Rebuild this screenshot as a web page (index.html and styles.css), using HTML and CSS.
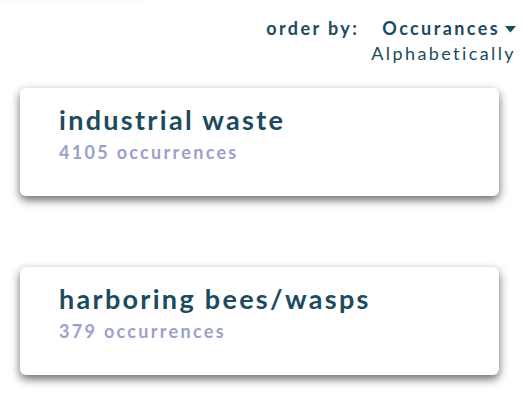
FILE: index.html
```html
<!DOCTYPE html>
<html>
<head>
<meta charset="utf-8">
<link rel="stylesheet" href="styles.css">
</head>
<body>
<div class="ghost"></div>
<div class="toolbar">
  <span class="order-label">order by:</span>
  <div class="order-options">
    <div class="option active">Occurances <svg class="caret" width="11" height="7" viewBox="0 0 11 7"><path d="M0 0 H11 L5.5 6.5 Z" fill="currentColor"/></svg></div>
    <div class="option">Alphabetically</div>
  </div>
</div>
<div class="list">
  <div class="card">
    <div class="title">industrial waste</div>
    <div class="count">4105 occurrences</div>
  </div>
  <div class="card">
    <div class="title">harboring bees/wasps</div>
    <div class="count">379 occurrences</div>
  </div>
</div>
</body>
</html>
```

FILE: styles.css
```css
html, body {
  margin: 0;
  padding: 0;
  background: #ffffff;
  font-family: Lato, "Open Sans", sans-serif;
  color: #1c4b60;
}
.ghost {
  width: 140px;
  height: 0;
  box-shadow: 0 0 5px 1px rgba(0,0,0,0.08);
}
.toolbar {
  display: flex;
  justify-content: flex-end;
  align-items: flex-start;
  padding: 16px 7px 0 0;
  font-size: 18px;
  letter-spacing: 2.4px;
  line-height: 25px;
}
.order-label {
  font-weight: 700;
  margin-right: 12px;
}
.order-options {
  display: flex;
  flex-direction: column;
  align-items: flex-end;
}
.option {
  font-weight: 400;
}
.option.active {
  font-weight: 700;
  display: flex;
  align-items: center;
}
.caret {
  margin-left: 5px;
  margin-right: 0;
  margin-top: 1px;
}
.list {
  display: flex;
  flex-direction: column;
  gap: 71px;
  padding: 22px 0 40px 20px;
}
.card {
  width: 479px;
  height: 108px;
  box-sizing: border-box;
  border-radius: 6px;
  background: #fff;
  box-shadow: 0 4px 10px rgba(0,0,0,0.6);
  padding: 14px 0 0 39px;
}
.title {
  font-size: 27px;
  font-weight: 700;
  letter-spacing: 2.3px;
  line-height: 36px;
  color: #1c4b60;
}
.count {
  font-size: 18px;
  font-weight: 700;
  letter-spacing: 2.3px;
  line-height: 28px;
  color: #9c9fcb;
}
```
